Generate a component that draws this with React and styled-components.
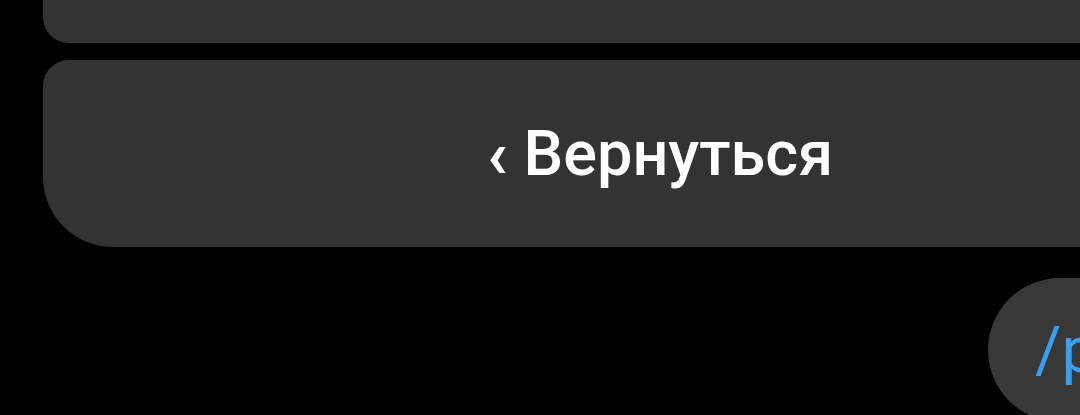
import React from "react";
import styled, { createGlobalStyle } from "styled-components";

const GlobalStyle = createGlobalStyle`
  html, body {
    margin: 0;
    padding: 0;
    background: #000;
    overflow: hidden;
  }
  body {
    font-family: Roboto, "Noto Sans", sans-serif;
  }
`;

const Screen = styled.div`
  width: 1080px;
  height: 415px;
  overflow: hidden;
  background: #000;
  display: flex;
  flex-direction: column;
  padding-left: 43px;
  box-sizing: border-box;
`;

const KeyRow = styled.div`
  width: 1234px;
  flex-shrink: 0;
  box-sizing: border-box;
  background: #333333;
  display: flex;
  align-items: center;
  justify-content: center;
  color: #fff;
  font-size: 63px;
  font-weight: 500;
  height: ${props => props.height}px;
  margin-top: ${props => props.top || 0}px;
  border-radius: ${props => props.radius};
`;

const Chevron = styled.span`
  font-size: 66px;
  font-weight: 700;
  margin-right: 16px;
  position: relative;
  top: 1px;
`;

const MessageLine = styled.div`
  display: flex;
  justify-content: flex-end;
  margin-top: 31px;
  margin-right: -120px;
  flex-shrink: 0;
`;

const Bubble = styled.div`
  width: 212px;
  height: 144px;
  box-sizing: border-box;
  border-radius: 72px;
  background: #383838;
  color: #3a9ff0;
  font-size: 64px;
  font-weight: 400;
  padding-left: 47px;
  display: flex;
  align-items: center;
`;

export default function App() {
  return (
    <>
      <GlobalStyle />
      <Screen>
        <KeyRow height={43} radius="0 0 0 26px" />
        <KeyRow height={187} top={17} radius="26px 0 0 70px">
          <Chevron>‹</Chevron>Вернуться
        </KeyRow>
        <MessageLine>
          <Bubble>/p</Bubble>
        </MessageLine>
      </Screen>
    </>
  );
}
